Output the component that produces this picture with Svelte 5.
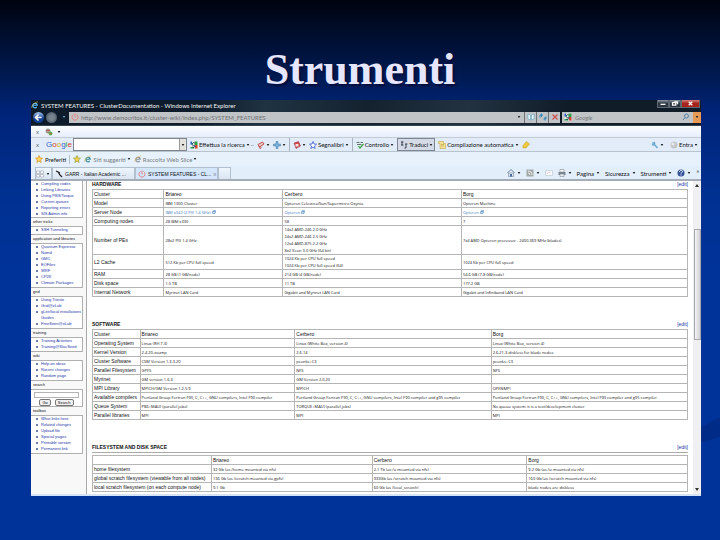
<script lang="ts">
	type Row = { label: string; cells: string[]; link?: boolean };

	const SIDEBAR: { title: string; items: string[] }[] = [
		{
			title: '',
			items: ['Compiling codes', 'Linking Libraries', 'Using PBS/Torque', 'Current queues', 'Reporting errors', 'SIS Admin info']
		},
		{ title: 'other tricks', items: ['SSH Tunneling'] },
		{
			title: 'application and libraries',
			items: ['Quantum Espresso', 'Namd', 'GMC', 'EOFiles', 'WRF', 'CP2K', 'Climate Packages']
		},
		{ title: 'grid', items: ['Using Trieste', 'Grid@eLab', 'gLite/local installations Guides', 'FreeSeen@eLab'] },
		{ title: 'training', items: ['Training Activities', 'Training@SlacSeed'] },
		{ title: 'wiki', items: ['Help on ideas', 'Recent changes', 'Random page'] }
	];
	const TOOLBOX = ['What links here', 'Related changes', 'Upload file', 'Special pages', 'Printable version', 'Permanent link'];

	const HARDWARE: Row[] = [
		{ label: 'Model', cells: ['IBM 1300 Cluster', 'Opteron Celestica/Sun/Supermicro Oxynia', 'Opteron Machine'] },
		{ label: 'Server Node', cells: ['IBM x342 (2 PIII 1.4 GHz)', 'Opteron', 'Opteron'], link: true },
		{ label: 'Computing nodes', cells: ['28 IBM x330', '58', '7'] },
		{
			label: 'Number of PEs',
			cells: [
				'28x2 PIII 1.4 GHz',
				'14x2 AMD-246 2.0 GHz\n24x2 AMD-246 2.5 GHz\n12x4 AMD-875 2.2 GHz\n8x2 Xeon 3.0 GHz (64 bit)',
				'7x4 AMD Opteron processor - 2400.369 MHz (blades)'
			]
		},
		{
			label: 'L2 Cache',
			cells: ['512 Kb per CPU full speed', '1024 Kb per CPU full speed\n1024 Kb per CPU full speed (64)', '1024 Kb per CPU full speed']
		},
		{ label: 'RAM', cells: ['28 GB (1 GB/node)', '214 GB (4 GB/node)', '54.6 GB (7.8 GB/node)'] },
		{ label: 'Disk space', cells: ['1.5 TB', '11 TB', '177.2 GB'] },
		{ label: 'Internal Network', cells: ['Myrinet LAN Card', 'Gigabit and Myrinet LAN Card', 'Gigabit and Infiniband LAN Card'] }
	];

	const SOFTWARE: Row[] = [
		{ label: 'Operating System', cells: ['Linux (RH 7.3)', 'Linux (White Box, version 4)', 'Linux (White Box, version 4)'] },
		{ label: 'Kernel Version', cells: ['2.4.20-xsump', '2.6.14', '2.6.21.3-diskless for blade nodes'] },
		{ label: 'Cluster Software', cells: ['CSM Version 1.3.3.20', 'pconks+C3', 'pconks+C3'] },
		{ label: 'Parallel Filesystem', cells: ['GPFS', 'NFS', 'NFS'] },
		{ label: 'Myrinet', cells: ['GM version 1.6.3', 'GM Version 2.0.20', ''] },
		{ label: 'MPI Library', cells: ['MPICH/GM Version 1.2.5.9', 'MPICH', 'OPENMPI'] },
		{
			label: 'Available compilers',
			cells: [
				'Portland Group Fortran F90, C, C++, GNU compilers, Intel F90 compiler',
				'Portland Group Fortran F90, C, C++, GNU compilers, Intel F90 compiler and g95 compiler',
				'Portland Group Fortran F90, C, C++, GNU compilers, Intel F90 compiler and g95 compiler'
			]
		},
		{ label: 'Queue System', cells: ['PBS+MAUI (parallel jobs)', 'TORQUE+MAUI (parallel jobs)', 'No queue system: it is a test/development cluster'] },
		{ label: 'Parallel libraries', cells: ['MPI', 'MPI', 'MPI'] }
	];

	const DISKS: Row[] = [
		{ label: 'home filesystem', cells: ['32 Gb (as /home mounted via nfs)', '2.1 Tb (as /u mounted via nfs)', '9.2 Gb (as /u mounted via nfs)'] },
		{
			label: 'global scratch filesystem (viewable from all nodes)',
			cells: ['136 Gb (as /scratch mounted via gpfs)', '933Gb (as /scratch mounted via nfs)', '160 Gb (as /scratch mounted via nfs)']
		},
		{ label: 'local scratch filesystem (on each compute node)', cells: ['9.1 Gb', '60 Gb (as /local_scratch)', 'blade nodes are diskless'] }
	];

	let address = $state('http://www.democritos.it/cluster-wiki/index.php/SYSTEM_FEATURES');
	let webSearch = $state('');
	let wikiSearch = $state('');
</script>

{#snippet arrow()}
	<svg class="arrow" viewBox="0 0 4 3" aria-hidden="true"><path d="M0 0h4L2 3z" /></svg>
{/snippet}

{#snippet star(fill: string, stroke: string)}
	<svg class="icon" viewBox="0 0 16 16" aria-hidden="true">
		<path d="M8 1l2 5 5 .4-4 3.600 1.300 5L8 12.200 3.700 15 5 10 1 6.400 6 6z" {fill} {stroke} stroke-width="1.500" />
	</svg>
{/snippet}

{#snippet power()}
	<svg class="icon" viewBox="0 0 16 16" aria-hidden="true">
		<path d="M5 3a6 6 0 1 0 6 0M8 1v8" fill="none" stroke="#e58084" stroke-width="2" />
	</svg>
{/snippet}

{#snippet explorer(color: string)}
	<svg class="icon" viewBox="0 0 16 16" aria-hidden="true">
		<path d="M4 8.500h8.500A4.500 4.500 0 1 0 11.500 12" fill="none" stroke={color} stroke-width="2.400" />
		<path d="M2 14C-1 10 9 1 14 2" fill="none" stroke="#e0b848" stroke-width="1.200" />
	</svg>
{/snippet}

{#snippet google()}
	<svg class="icon" viewBox="0 0 16 16" aria-hidden="true">
		<path d="M1 1h14v14H1z" fill="#eef3ee" />
		<path d="M9 1h6v7H9z" fill="#2b9f48" />
		<path d="M10 8h5v7h-5z" fill="#d8402f" />
		<path d="M1 1h3v6H1z" fill="#2c62c9" />
		<path d="M1 12h7v3H1z" fill="#2b9f48" />
		<path d="M9 4a3 3 0 1 0 0 5 2 2 0 1 1-4 3" fill="none" stroke="#173d5a" stroke-width="2" />
	</svg>
{/snippet}

{#snippet heading(text: string)}
	<h2>{text}<a href="#edit">[edit]</a></h2>
{/snippet}

{#snippet specs(kind: string, corner: string, names: string[], rows: Row[])}
	<table class={kind}>
		<thead>
			<tr>
				<th>{corner}</th>
				{#each names as name}
					<th>{name}</th>
				{/each}
			</tr>
		</thead>
		<tbody>
			{#each rows as row}
				<tr>
					<th>{row.label}</th>
					{#each row.cells as cell}
						<td>
							{#if row.link}
								<a href="#node">{cell} <svg class="ext" viewBox="0 0 8 8" aria-hidden="true"><path d="M1 3h5v4H1zM3 3V1h4v4" /></svg></a>
							{:else}{cell}{/if}
						</td>
					{/each}
				</tr>
			{/each}
		</tbody>
	</table>
{/snippet}

<div class="slide">
	<svg class="wave" viewBox="0 0 720 540" preserveAspectRatio="none" aria-hidden="true">
		<path d="M640 446C680 438 702 427 720 417V437C702 443 670 448 640 450z" />
	</svg>
	<h1>Strumenti</h1>

	<div class="window">
		<header>
			<div class="titlebar">
				{@render explorer('#59b8ee')}
				<span>SYSTEM FEATURES - ClusterDocumentation - Windows Internet Explorer</span>
				<div class="controls">
					<button aria-label="Riduci a icona"><svg viewBox="0 0 12 8"><path d="M3 5h6" /></svg></button>
					<button aria-label="Ripristina"><svg viewBox="0 0 12 8"><path d="M3 3h4v3H3zM5 2h4v3" /></svg></button>
					<button class="close" aria-label="Chiudi"><svg viewBox="0 0 12 8"><path d="M4 2l4 4M8 2L4 6" /></svg></button>
				</div>
			</div>
			<div class="navbar">
				<button class="round back" aria-label="Indietro"><svg viewBox="0 0 12 12"><path d="M6 2L2 6l4 4M2 6h8" /></svg></button>
				<button class="round" aria-label="Avanti"><svg viewBox="0 0 12 12"><path d="M6 2l4 4-4 4M2 6h8" /></svg></button>
				<span class="recent">{@render arrow()}</span>
				<label class="address">
					{@render power()}
					<input aria-label="Indirizzo" bind:value={address} />
					{@render arrow()}
				</label>
				<div class="actions">
					<button aria-label="Compatibilità"><svg class="icon" viewBox="0 0 16 16"><path d="M2 2l5 2v10l-5-2zM14 2L9 4v10l5-2z" fill="#e8f6fd" stroke="#4a94b8" /></svg></button>
					<button aria-label="Aggiorna"><svg class="icon" viewBox="0 0 16 16"><path d="M2 9V4h6M5 1v7M14 7v5H9m3 3V8" fill="none" stroke="#3187bd" stroke-width="2" /></svg></button>
					<button aria-label="Interrompi"><svg class="icon" viewBox="0 0 16 16"><path d="M3 3l10 10M13 3L3 13" stroke="#cc5352" stroke-width="2.500" /></svg></button>
				</div>
				<label class="engine">
					{@render google()}
					<input aria-label="Ricerca" placeholder="Google" />
					<svg class="icon" viewBox="0 0 16 16" aria-hidden="true"><path d="M9 2a4 4 0 1 1 0 8 4 4 0 0 1 0-8M6 9l-4 5" fill="none" stroke="#5585ab" stroke-width="2" /></svg>
					<span class="go">{@render arrow()}</span>
				</label>
			</div>
		</header>

		<div class="bar extra">
			<button class="x" aria-label="Chiudi barra">x</button>
			<button class="addon" aria-label="Componente aggiuntivo">
				<svg class="icon" viewBox="0 0 16 16"><circle cx="6" cy="6" r="5" fill="#a79c92" /><circle cx="11" cy="11" r="4" fill="#68b153" /><path d="M3 5h6M9 11h4" stroke="#b44" stroke-width="1.500" /></svg>
				{@render arrow()}
			</button>
		</div>

		<div class="bar gbar">
			<button class="x" aria-label="Chiudi Google Toolbar">x</button>
			<span class="logo"><i>G</i><i>o</i><i>o</i><i>g</i><i>l</i><i>e</i></span>
			<div class="combo">
				<input aria-label="Cerca con Google" bind:value={webSearch} />
				<button aria-label="Cronologia">{@render arrow()}</button>
			</div>
			<button class="tool">{@render google()}Effettua la ricerca {@render arrow()}<span class="dots">··</span></button>
			<button class="tool" aria-label="Novità"><svg class="icon" viewBox="0 0 16 16"><path d="M2 7l9-5 3 4-9 6zM4 10l2 5 3-2" fill="#eecaca" stroke="#c0504f" stroke-width="2" /></svg>{@render arrow()}</button>
			<button class="tool" aria-label="Aggiungi"><svg class="icon" viewBox="0 0 16 16"><path d="M6 1h4v5h5v4h-5v5H6v-5H1V6h5z" fill="#79afd9" stroke="#4179a8" /></svg>{@render arrow()}</button>
			<button class="tool divided" aria-label="Popup"><svg class="icon" viewBox="0 0 16 16"><path d="M2 4l9-3 4 9-9 5z" fill="#d7474b" stroke="#8b2c4b" /><path d="M5 6h6v5H5z" fill="#f4dede" /></svg>{@render arrow()}</button>
			<button class="tool">{@render star('#fff', '#2f4fd0')}Segnalibri{@render arrow()}</button>
			<button class="tool divided"><svg class="icon" viewBox="0 0 16 16"><path d="M1 3h6M9 3h5M2 7h9" stroke="#61736b" stroke-width="2" /><path d="M5 10l3 4 7-8" fill="none" stroke="#3fa045" stroke-width="2.500" /></svg>Controllo {@render arrow()}</button>
			<button class="tool pressed"><svg class="icon" viewBox="0 0 16 16"><path d="M2 2h5M4 1v8M2 8h5M10 6h5M12 6v8M9 14h3" fill="none" stroke="#3a4252" stroke-width="2" /></svg>Traduci {@render arrow()}</button>
			<button class="tool"><svg class="icon" viewBox="0 0 16 16"><path d="M1 1h10v4h4v10H4V5H1z" fill="#f6e391" stroke="#b8963b" /><path d="M6 7h6M6 10h6" stroke="#a88436" /></svg>Compilazione automatica {@render arrow()}</button>
			<button class="tool" aria-label="Evidenzia"><svg class="icon" viewBox="0 0 16 16"><path d="M9 1l6 5-7 8H2V9z" fill="#f0ca3c" stroke="#b99120" /></svg></button>
			<div class="account">
				<button class="tool" aria-label="Opzioni"><svg class="icon" viewBox="0 0 16 16"><path d="M3 3l10 11M2 7c4 3 7-2 4-5" fill="none" stroke="#69a8d4" stroke-width="3" /></svg>{@render arrow()}</button>
				<button class="tool"><svg class="icon" viewBox="0 0 16 16"><circle cx="8" cy="8" r="7" fill="#c3c6ca" /><circle cx="6" cy="6" r="3" fill="#e9eaec" /></svg>Entra {@render arrow()}</button>
			</div>
		</div>

		<div class="bar favorites">
			<button class="tool">{@render star('#ffd659', '#d9932a')}Preferiti</button>
			<span class="rule"></span>
			<button class="tool" aria-label="Aggiungi a Preferiti">{@render star('#f5cf4d', '#9ba43a')}</button>
			<button class="tool muted">{@render explorer('#3d8f9e')}Siti suggeriti {@render arrow()}</button>
			<button class="tool muted">{@render explorer('#8d979c')}Raccolta Web Slice {@render arrow()}</button>
		</div>

		<div class="bar tabs">
			<button class="tab quick" aria-label="Schede"><svg class="icon" viewBox="0 0 16 16"><path d="M1 2h6v5H1zM9 2h6v5H9zM1 9h6v5H1zM9 9h6v5H9z" fill="#fff" stroke="#8791a0" /></svg>{@render arrow()}</button>
			<button class="tab"><svg class="icon" viewBox="0 0 16 16"><path d="M2 2l8 4M6 3l3 6 5 5" fill="none" stroke="#222" stroke-width="2.500" /></svg><span>GARR - Italian Academic ...</span></button>
			<button class="tab active">{@render power()}<span>SYSTEM FEATURES - CL...</span><small>x</small></button>
			<button class="tab new" aria-label="Nuova scheda"></button>
			<div class="commands">
				<button class="tool" aria-label="Pagina iniziale"><svg class="icon" viewBox="0 0 16 16"><path d="M1 8l7-7 7 7" fill="none" stroke="#6f7f99" stroke-width="2" /><path d="M3 8h10v7H3z" fill="#e3e7f0" stroke="#5d6d8c" /><path d="M6 10h4v5H6z" fill="#4a6ea8" /></svg>{@render arrow()}</button>
				<button class="tool" aria-label="Feed"><svg class="icon" viewBox="0 0 16 16"><path d="M1 1h14v14H1z" fill="#a3a9a9" /><path d="M4 4c5 0 8 3 8 8M4 8c3 0 4 2 4 4" fill="none" stroke="#f4f4f4" stroke-width="2" /></svg>{@render arrow()}</button>
				<button class="tool" aria-label="Posta"><svg class="icon" viewBox="0 0 16 16"><path d="M1 3h14v10H1z" fill="#f7f9fb" stroke="#b5bec7" /><path d="M4 10l4-4 3 2" fill="none" stroke="#d0a3a3" /></svg></button>
				<button class="tool" aria-label="Stampa"><svg class="icon" viewBox="0 0 16 16"><path d="M4 1h8v5H4z" fill="#fff" stroke="#737c86" /><path d="M1 6h14v6H1z" fill="#7b858d" /><path d="M4 10h8v5H4z" fill="#e9eef1" stroke="#737c86" /></svg>{@render arrow()}</button>
				<button class="tool">Pagina {@render arrow()}</button>
				<button class="tool">Sicurezza {@render arrow()}</button>
				<button class="tool">Strumenti {@render arrow()}</button>
				<button class="tool" aria-label="Guida"><svg class="icon" viewBox="0 0 16 16"><circle cx="8" cy="8" r="7" fill="#35539b" /><path d="M5 6c0-4 6-4 6-1 0 2-3 2-3 4M8 11v2" fill="none" stroke="#fff" stroke-width="2" /></svg>{@render arrow()}</button>
				<button class="more" aria-label="Altro">»</button>
			</div>
		</div>

		<div class="page">
			<nav>
				{#each SIDEBAR as group}
					{#if group.title}
						<h3>{group.title}</h3>
					{/if}
					<ul class:first={!group.title}>
						{#each group.items as item}
							<li><a href="#item">{item}</a></li>
						{/each}
					</ul>
				{/each}
				<h3><label for="wiki-search">search</label></h3>
				<form onsubmit={(e) => e.preventDefault()}>
					<input id="wiki-search" bind:value={wikiSearch} />
					<div>
						<button>Go</button>
						<button>Search</button>
					</div>
				</form>
				<h3>toolbox</h3>
				<ul>
					{#each TOOLBOX as item}
						<li><a href="#item">{item}</a></li>
					{/each}
				</ul>
			</nav>

			<main>
				<section>
					{@render heading('HARDWARE')}
					{@render specs('hardware', 'Cluster', ['Briareo', 'Cerbero', 'Borg'], HARDWARE)}
				</section>
				<section>
					{@render heading('SOFTWARE')}
					{@render specs('software', 'Cluster', ['Briareo', 'Cerbero', 'Borg'], SOFTWARE)}
				</section>
				<section class="ruled">
					{@render heading('FILESYSTEM AND DISK SPACE')}
					{@render specs('disks', '', ['Briareo', 'Cerbero', 'Borg'], DISKS)}
				</section>
			</main>

			<div class="scrollbar" aria-hidden="true">
				<svg viewBox="0 0 4 3"><path d="M0 3h4L2 0z" /></svg>
				<div class="thumb"></div>
				<svg viewBox="0 0 4 3"><path d="M0 0h4L2 3z" /></svg>
			</div>
		</div>
		<footer></footer>
	</div>
</div>

<style>
	:global(body) {
		margin: 0;
	}

	* {
		box-sizing: border-box;
	}

	.slide {
		position: relative;
		min-height: 100vh;
		padding: 40px 19px 40px 31px;
		background: linear-gradient(#00030f, #001b55 80px, #002377 110px, #003192 200px, #003399 270px);
		font-family: Lato, 'Liberation Sans', Arial, sans-serif;
		font-size: 6px;
		color: #111114;
	}

	.wave {
		position: absolute;
		inset: 0;
		width: 100%;
		height: 100%;
		fill: #002b86;
	}

	h1 {
		position: relative;
		margin: 0;
		padding-right: 12px;
		text-align: center;
		font: bold 44px/60px 'Liberation Serif', 'Times New Roman', serif;
		color: #e6e6ff;
		text-shadow: 2px 2px 2px #000d3c;
	}

	.window {
		position: relative;
		background: #fff;
		overflow: hidden;
	}

	button,
	input {
		margin: 0;
		padding: 0;
		border: 0;
		background: none;
		font: inherit;
		color: inherit;
	}

	.icon {
		flex: none;
		width: 8px;
		height: 8px;
	}

	.arrow {
		flex: none;
		width: 4px;
		height: 2px;
		fill: #222;
	}

	header {
		height: 26px;
		background: linear-gradient(100deg, #0d1b2b 25%, #1f3342 35%, #14222f 50%, #223240 65%, #101c28 80%);
		border-bottom: 1px solid #38444e;
	}

	.titlebar {
		display: flex;
		align-items: center;
		gap: 2px;
		height: 10px;
		padding-right: 1px;
		color: #f2f4f6;
		white-space: nowrap;
	}

	.controls {
		display: flex;
		align-self: flex-start;
		height: 8px;
		margin-left: auto;
	}

	.controls button {
		display: flex;
		width: 12px;
		background: linear-gradient(#8d97a1, #2c3743 50%);
		border: 1px solid #5d6872;
		border-top: 0;
	}

	.controls .close {
		width: 19px;
		background: linear-gradient(#cf8078, #a6231b 50%);
	}

	.controls svg {
		width: 100%;
		height: 7px;
		fill: none;
		stroke: #fff;
		stroke-width: 1.5;
	}

	.navbar {
		display: flex;
		align-items: center;
		height: 14px;
		padding-left: 2px;
		color: #6e7175;
	}

	.round {
		display: flex;
		width: 11px;
		height: 11px;
		margin-right: 2px;
		padding: 1px;
		border-radius: 50%;
		background: radial-gradient(#8b98a2, #3e4b58);
	}

	.round.back {
		background: linear-gradient(#a9c8ee, #123f91 60%);
	}

	.round svg {
		width: 9px;
		height: 9px;
		fill: none;
		stroke: #fff;
		stroke-width: 2;
	}

	.round:not(.back) svg {
		stroke: #76838d;
	}

	.recent {
		display: flex;
		width: 10px;
		justify-content: center;
	}

	.recent .arrow {
		fill: #64a2cf;
	}

	.address,
	.engine,
	.actions {
		display: flex;
		align-items: center;
		height: 11px;
		background: #c1c4c6;
	}

	.address {
		flex: 1;
		gap: 2px;
		padding: 0 3px 0 2px;
	}

	.address input,
	.engine input {
		flex: 1;
		min-width: 0;
		height: 10px;
	}

	.actions {
		width: 36px;
		margin-right: 2px;
	}

	.actions button {
		display: flex;
		flex: 1;
		align-items: center;
		justify-content: center;
		height: 11px;
		border-left: 1px solid #6e7477;
	}

	.engine {
		width: 139px;
		gap: 3px;
		padding-left: 2px;
	}

	.engine input::placeholder {
		color: #74777b;
		font-style: italic;
	}

	.go {
		display: flex;
		align-items: center;
		justify-content: center;
		width: 8px;
		height: 11px;
		background: #e69a55;
	}

	.bar {
		display: flex;
		align-items: center;
		white-space: nowrap;
		background: #e4effa;
	}

	.bar button {
		display: flex;
		align-items: center;
		gap: 2px;
	}

	.bar .x {
		width: 10px;
		padding-left: 5px;
		color: #6b747d;
	}

	.extra {
		height: 12px;
		gap: 4px;
		background: linear-gradient(#fbfdff, #e6eefa);
		border-bottom: 1px solid #c3cbd5;
	}

	.extra .addon {
		gap: 4px;
	}

	.gbar {
		height: 14px;
		gap: 3px;
		background: #e2ecf8;
		border-bottom: 1px solid #b9c3cd;
	}

	.logo {
		width: 24px;
		margin-left: 2px;
		font-family: 'Liberation Sans', Arial, sans-serif;
		font-size: 8px;
	}

	.logo i {
		font-style: normal;
		color: #3565c8;
	}

	.logo i:nth-child(2),
	.logo i:nth-child(6) {
		color: #d4432f;
	}

	.logo i:nth-child(3) {
		color: #dda62a;
	}

	.logo i:nth-child(5) {
		color: #38a04a;
	}

	.combo {
		display: flex;
		width: 114px;
		height: 13px;
		background: #fff;
		border: 1px solid #7d868e;
	}

	.combo input {
		flex: 1;
		min-width: 0;
	}

	.combo button {
		width: 7px;
		justify-content: center;
		background: #e4e2dc;
		border-left: 1px solid #9a9a98;
	}

	.dots {
		color: #7f8ca0;
	}

	.bar .divided {
		height: 13px;
		padding-left: 3px;
		border-left: 1px solid #a9b3bd;
	}

	.gbar .tool {
		gap: 1px;
	}

	.bar .pressed {
		height: 13px;
		padding: 0 1px 0 2px;
		background: #d5dbe6;
		border: 1px solid #7c8694;
	}

	.account {
		display: flex;
		gap: 6px;
		margin-left: auto;
		padding-right: 3px;
	}

	.favorites {
		height: 14px;
		padding-left: 4px;
		gap: 3px;
		background: #e7f1fb;
	}

	.rule {
		height: 9px;
		border-left: 1px solid #b4bec8;
	}

	.bar .muted {
		gap: 1px;
		color: #777d84;
	}

	.tabs {
		align-items: flex-end;
		height: 15px;
		padding-left: 4px;
		background: #e2eefa;
		border-bottom: 2px solid #a4adb8;
	}

	.bar .tab {
		flex: none;
		width: 83px;
		height: 12px;
		padding: 0 2px;
		background: linear-gradient(#eef5fc, #d9e5f2);
		border: 1px solid #b2bfcc;
		border-bottom: 0;
		font-family: 'Liberation Sans', Arial, sans-serif;
		font-size: 5px;
	}

	.bar .quick {
		width: 17px;
		padding: 0;
	}

	.bar .active {
		background: #d3e6fc;
	}

	.bar .new {
		width: 13px;
	}

	small {
		margin-left: auto;
		font-size: 6px;
		color: #7b8590;
	}

	.commands {
		display: flex;
		align-items: center;
		gap: 5px;
		height: 12px;
		margin-left: auto;
		padding-right: 2px;
	}

	.more {
		align-self: flex-start;
	}

	.page {
		display: flex;
		font-size: 5px;
		line-height: 6px;
	}

	nav {
		width: 56px;
		padding-right: 3px;
		background: #f8f8f8;
		border-right: 1px solid #a9a9a9;
		font-family: 'Liberation Sans', Arial, sans-serif;
		font-size: 4px;
	}

	h3 {
		margin: 0;
		padding: 1px 0 1px 2px;
		font-size: 4px;
		font-weight: normal;
		line-height: 6px;
		white-space: nowrap;
	}

	ul,
	form {
		margin: 0;
		background: #fff;
		border: 1px solid #b0b0b0;
		border-left: 0;
	}

	ul {
		padding: 0 0 1px 10px;
		list-style: none;
	}

	.first {
		border-top: 0;
		padding-bottom: 0;
	}

	li::before {
		content: '';
		float: left;
		width: 2px;
		height: 2px;
		margin: 2px 0 0 -5px;
		background: #6c7fa8;
	}

	a {
		color: #1b36a8;
		text-decoration: none;
	}

	form {
		height: 18px;
		padding: 2px 3px;
	}

	form input {
		display: block;
		width: 100%;
		height: 6px;
		border: 1px solid #b4b4b4;
	}

	form div {
		display: flex;
		justify-content: center;
		gap: 4px;
		margin-top: 1px;
	}

	form button {
		height: 7px;
		padding: 0 2px;
		background: #f0f0f0;
		border: 1px solid #777;
		border-radius: 2px;
		line-height: 5px;
	}

	main {
		flex: 1;
		min-width: 0;
		padding: 0 5px 2px;
	}

	section + section {
		margin-top: 24px;
	}

	h2 {
		display: flex;
		justify-content: space-between;
		margin: 0 0 2px;
		font-family: 'Liberation Sans', Arial, sans-serif;
		font-size: 5px;
		line-height: 6px;
	}

	h2 a {
		font-weight: normal;
	}

	.ruled h2 {
		padding-bottom: 2px;
		border-bottom: 1px solid #aaa;
	}

	table {
		width: 100%;
		table-layout: fixed;
		border-collapse: collapse;
		line-height: 7px;
	}

	th,
	td {
		height: 9px;
		padding: 0 1px;
		border: 1px solid #b5b5b5;
		text-align: left;
		font-weight: normal;
		white-space: pre;
	}

	th {
		font-family: 'Liberation Sans', Arial, sans-serif;
	}

	td {
		font-family: 'Open Sans', 'Noto Sans', sans-serif;
		font-size: 4px;
	}

	td a {
		color: #3c78c0;
	}

	td:has(a) {
		white-space: normal;
	}

	.ext {
		width: 4px;
		height: 4px;
		fill: #cfe2f5;
		stroke: #3c78c0;
	}

	.hardware th:nth-child(1) {
		width: 12%;
	}

	.hardware th:nth-child(2) {
		width: 20%;
	}

	.hardware th:nth-child(3) {
		width: 30%;
	}

	.software th:nth-child(1) {
		width: 8%;
	}

	.software th:nth-child(2) {
		width: 26%;
	}

	.software th:nth-child(3) {
		width: 33%;
	}

	.disks th:nth-child(1) {
		width: 20%;
	}

	.disks th:nth-child(2) {
		width: 27%;
	}

	.disks th:nth-child(3) {
		width: 26%;
	}

	.scrollbar {
		display: flex;
		flex-direction: column;
		align-items: center;
		width: 8px;
		padding: 3px 0;
		background: #f0f0f2;
	}

	.scrollbar svg {
		width: 4px;
		height: 3px;
		fill: #333;
	}

	.thumb {
		width: 7px;
		height: 36%;
		margin: 42px 0 auto;
		background: linear-gradient(90deg, #f4f4f6, #cfcfd5);
		border: 1px solid #a5a8ad;
	}

	footer {
		height: 2px;
		background: #d5e3f6;
	}
</style>
